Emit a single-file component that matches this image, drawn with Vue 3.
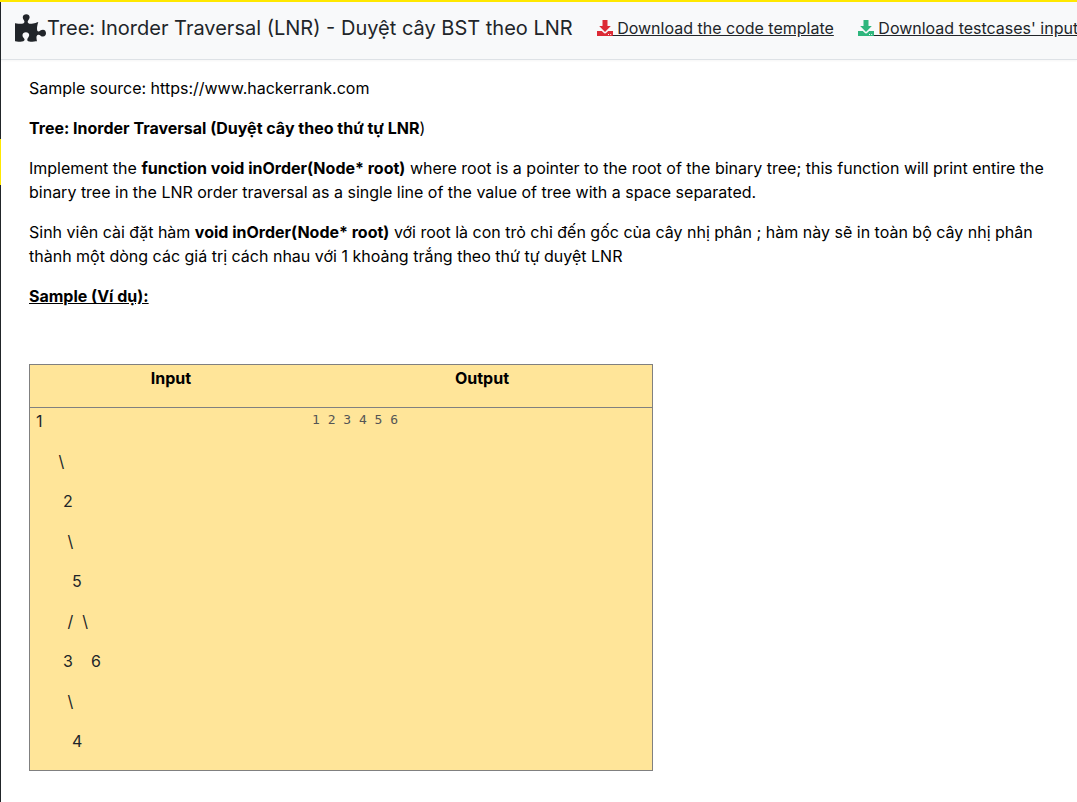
<script setup>
const downloads = [
  { label: 'Download the code template', tone: 'red' },
  { label: "Download testcases' input", tone: 'green' },
]
const nb = '\u00a0'
const treeLines = [
  '1',
  nb.repeat(5) + '\\',
  nb.repeat(6) + '2',
  nb.repeat(7) + '\\',
  nb.repeat(8) + '5',
  nb.repeat(7) + '/' + nb.repeat(2) + '\\',
  nb.repeat(6) + '3' + nb.repeat(4) + '6',
  nb.repeat(7) + '\\',
  nb.repeat(8) + '4',
]
</script>

<template>
  <div class="page">
    <div class="rail"><span class="marker"></span></div>
    <div class="panel">
      <header class="topbar">
        <h1 class="title">
          <svg class="puzzle" viewBox="0 0 576 512" aria-hidden="true">
            <path d="M519.442 288.651c-41.519 0-59.5 31.593-82.058 31.593C377.409 320.244 432 144 432 144s-196.288 80-196.288-3.297c0-35.827 36.288-46.25 36.288-85.985C272 19.216 243.885 0 210.539 0c-34.654 0-66.366 18.891-66.366 56.346 0 41.364 31.711 59.277 31.711 81.75C175.885 207.719 0 166.758 0 166.758v333.237s178.635 41.047 178.635-28.662c0-22.473-40-40.107-40-81.471 0-37.456 29.25-56.346 63.577-56.346 33.673 0 61.788 19.216 61.788 54.717 0 39.735-36.288 50.158-36.288 85.985 0 60.803 129.675 25.73 181.23 25.73 0 0-34.725-120.101 25.827-120.101 35.962 0 46.423 36.152 86.308 36.152C556.712 416 576 387.99 576 354.443c0-34.199-18.962-65.792-56.558-65.792z" />
          </svg>
          <span>Tree: Inorder Traversal (LNR) - Duyệt cây BST theo LNR</span>
        </h1>
        <a v-for="item in downloads" :key="item.label" class="download" href="#">
          <svg class="arrow" :class="item.tone" viewBox="0 0 16 16" aria-hidden="true">
            <path fill-rule="evenodd" d="M5.5 0h5v6h3.3L8 12 2.2 6h3.3zM0 11h4.8l1.8 1.8a2 2 0 0 0 2.8 0L11.200 11H16v5H0zM11 14v1h1v-1zM13.200 14v1h1v-1z" />
          </svg>{{ nb }}{{ item.label }}
        </a>
      </header>
      <main class="content">
        <p>Sample source: https://www.hackerrank.com</p>
        <p><strong>Tree: Inorder Traversal (Duyệt cây theo thứ tự LNR</strong>)</p>
        <p>Implement the <strong>function void inOrder(Node* root)</strong> where root is a pointer to the root of the binary tree; this function will print entire the binary tree in the LNR order traversal as a single line of the value of tree with a space separated.</p>
        <p>Sinh viên cài đặt hàm <strong>void inOrder(Node* root)</strong> với root là con trỏ chỉ đến gốc của cây nhị phân ; hàm này sẽ in toàn bộ cây nhị phân thành một dòng các giá trị cách nhau với 1 khoảng trắng theo thứ tự duyệt LNR</p>
        <p class="heading"><strong>Sample (Ví dụ):</strong></p>
        <p>{{ nb }}</p>
        <table class="sample">
          <thead>
            <tr>
              <th class="input-col" scope="col"><p>Input</p></th>
              <th scope="col"><p>Output</p></th>
            </tr>
          </thead>
          <tbody>
            <tr>
              <td class="tree"><p v-for="(line, i) in treeLines" :key="i">{{ line }}</p></td>
              <td><pre>1 2 3 4 5 6</pre></td>
            </tr>
          </tbody>
        </table>
      </main>
    </div>
  </div>
</template>

<style>
body {
  margin: 0;
  background: #fff;
}
</style>

<style scoped>
.page {
  display: flex;
  box-sizing: border-box;
  min-height: 100vh;
  border-top: 2px solid #ffe800;
  font: 16px/24px Inter, "Noto Sans", sans-serif;
  color: #212529;
  overflow: hidden;
}
.rail {
  flex: none;
  width: 1px;
  background: #212529;
}
.marker {
  display: block;
  height: 46px;
  margin-top: 137px;
  background: #ffe800;
}
.panel {
  flex: 1;
  min-width: 0;
}
.topbar {
  display: flex;
  align-items: center;
  gap: 24px;
  box-sizing: border-box;
  height: 58px;
  padding: 0 0 6px 14px;
  background: #f8f9fa;
  border-bottom: 1px solid #dee2e6;
  box-shadow: 0 1px 2px rgba(0, 0, 0, 0.04);
  white-space: nowrap;
  overflow: hidden;
}
.title {
  display: flex;
  align-items: center;
  gap: 1px;
  margin: 0;
  font-size: 20px;
  font-weight: 400;
}
.puzzle {
  width: 31px;
  height: 28px;
  fill: #212529;
}
.download {
  color: #212529;
  text-decoration: underline;
}
.arrow {
  width: 16px;
  height: 16px;
  vertical-align: -2px;
}
.red {
  fill: #dc2a35;
}
.green {
  fill: #2eb67d;
}
.content {
  padding: 16px 28px;
  color: #000;
}
p {
  margin: 0 0 16px;
}
.heading {
  text-decoration: underline;
}
.sample {
  width: 624px;
  max-width: 100%;
  table-layout: fixed;
  border: 1px solid #808080;
  border-collapse: collapse;
  background: #ffe599;
}
th,
td {
  padding: 1px 0;
  text-align: center;
  vertical-align: top;
}
th {
  border-bottom: 1px solid #808080;
}
.input-col {
  width: 282px;
}
td {
  text-align: left;
  color: #212529;
}
.tree {
  padding-left: 6px;
}
pre {
  margin: 0;
  font: 13px/21px "DejaVu Sans Mono", monospace;
  color: #555;
}
</style>
